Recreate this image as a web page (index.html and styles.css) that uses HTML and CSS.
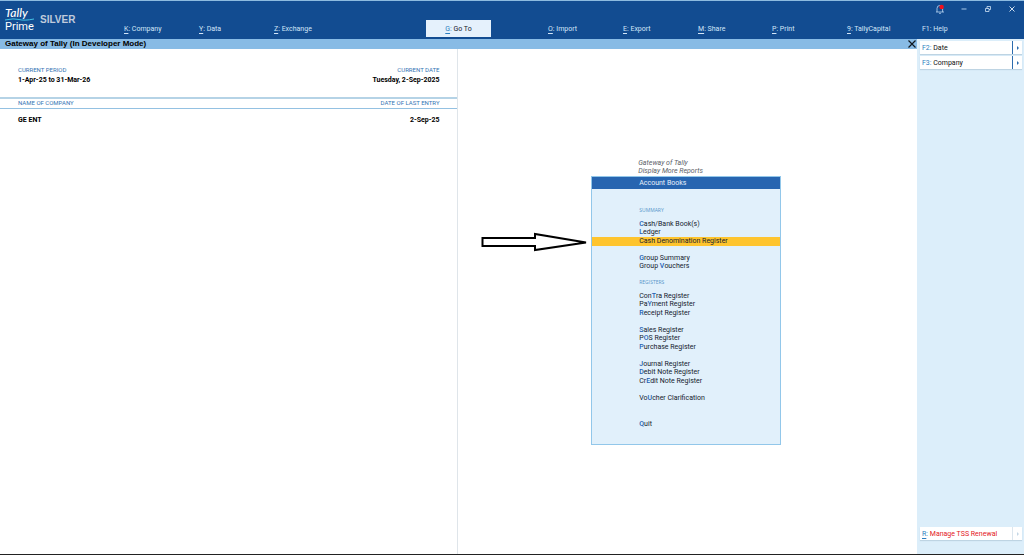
FILE: index.html
```html
<!DOCTYPE html>
<html lang="en">
<head>
<meta charset="utf-8">
<title>Gateway of Tally</title>
<link rel="stylesheet" href="styles.css">
</head>
<body>
<header class="topbar">
  <div class="brand">
    <div class="logo">
      <span class="logo-tally">Tally</span>
      <svg class="logo-swoosh" viewBox="0 0 30 3"><path d="M0 2 Q9 0 14 1.500 T29 1" fill="none" stroke="#45c3e6" stroke-width="1"/></svg>
      <span class="logo-prime">Prime</span>
    </div>
    <span class="edition">SILVER</span>
  </div>
  <div class="topbar-right">
    <div class="window-controls">
      <button class="win-btn" aria-label="Notifications"><svg viewBox="0 0 10 10"><path d="M2 8V4.5Q2 1.5 4.8 1.5Q7.6 1.5 7.6 4.5V8M1 8H9M4 9.3H6" fill="none" stroke="#bcd8f3" stroke-width=".8"/><circle cx="6.600" cy="3" r="2.300" fill="#f3101c"/></svg></button>
      <button class="win-btn" aria-label="Minimize"><svg viewBox="0 0 10 10"><path d="M2.500 5H7.500" stroke="#a8c8e8"/></svg></button>
      <button class="win-btn" aria-label="Restore"><svg viewBox="0 0 10 10"><path d="M2.500 4.500H6V7.500H2.500ZM4 4.500V2.500H7.500V5.500H6" fill="none" stroke="#d0e2f4" stroke-width=".8"/></svg></button>
      <button class="win-btn" aria-label="Close window"><svg viewBox="0 0 10 10"><path d="M2.500 2.500L7.500 7.500M7.500 2.500L2.500 7.500" stroke="#e4eef8" stroke-width=".9"/></svg></button>
    </div>
    <nav class="menu">
      <button class="menu-item"><u>K</u>: Company</button>
      <button class="menu-item"><u>Y</u>: Data</button>
      <button class="menu-item"><u>Z</u>: Exchange</button>
      <button class="menu-item goto"><span class="key"><u>G</u>:</span> Go To</button>
      <button class="menu-item"><u>O</u>: Import</button>
      <button class="menu-item"><u>E</u>: Export</button>
      <button class="menu-item"><u>M</u>: Share</button>
      <button class="menu-item"><u>P</u>: Print</button>
      <button class="menu-item"><u>9</u>: TallyCapital</button>
      <button class="menu-item">F1: Help</button>
    </nav>
  </div>
</header>
<div class="body">
  <main class="workspace">
    <div class="titlebar">
      <h1 class="title">Gateway of Tally (In Developer Mode)</h1>
      <button class="close" aria-label="Close"><svg viewBox="0 0 10 10"><path d="M1.500 1.500L8.500 8.500M8.500 1.500L1.500 8.500" stroke="#101820" stroke-width="1.200"/></svg></button>
    </div>
    <div class="panes">
      <section class="info">
        <div class="row period">
          <div><div class="label">CURRENT PERIOD</div><div class="value">1-Apr-25 to 31-Mar-26</div></div>
          <div class="end"><div class="label">CURRENT DATE</div><div class="value">Tuesday, 2-Sep-2025</div></div>
        </div>
        <div class="row heads"><span class="label">NAME OF COMPANY</span><span class="label">DATE OF LAST ENTRY</span></div>
        <div class="row company"><span class="value">GE ENT</span><span class="value">2-Sep-25</span></div>
      </section>
      <section class="stage">
        <div class="popup-wrap">
          <div class="crumbs"><div>Gateway of Tally</div><div>Display More Reports</div></div>
          <div class="popup">
            <svg class="arrow" viewBox="0 0 108 20"><path d="M1.500 6H54V2L105 10.500L54 18V14H1.500Z" fill="#fff" stroke="#000" stroke-width="2"/></svg>
            <h2 class="popup-title">Account Books</h2>
            <div class="popup-body">
              <h3 class="section">SUMMARY</h3>
              <div class="group">
                <a class="item" href="#"><b>C</b>ash/Bank Book(s)</a>
                <a class="item" href="#"><b>L</b>edger</a>
                <a class="item selected" href="#">Cash Denomination Register</a>
              </div>
              <div class="group two">
                <a class="item" href="#"><b>G</b>roup Summary</a>
                <a class="item" href="#">Group <b>V</b>ouchers</a>
              </div>
              <h3 class="section">REGISTERS</h3>
              <div class="group">
                <a class="item" href="#">Con<b>T</b>ra Register</a>
                <a class="item" href="#">Pa<b>Y</b>ment Register</a>
                <a class="item" href="#"><b>R</b>eceipt Register</a>
              </div>
              <div class="group">
                <a class="item" href="#"><b>S</b>ales Register</a>
                <a class="item" href="#">P<b>O</b>S Register</a>
                <a class="item" href="#"><b>P</b>urchase Register</a>
              </div>
              <div class="group">
                <a class="item" href="#"><b>J</b>ournal Register</a>
                <a class="item" href="#"><b>D</b>ebit Note Register</a>
                <a class="item" href="#">Cr<b>E</b>dit Note Register</a>
              </div>
              <div class="group one"><a class="item" href="#">Vo<b>U</b>cher Clarification</a></div>
              <div class="group one quit"><a class="item" href="#"><b>Q</b>uit</a></div>
            </div>
          </div>
        </div>
      </section>
    </div>
  </main>
  <aside class="sidebar">
    <div class="side-row"><button class="side-btn"><span class="key">F2:</span> Date</button><button class="side-arrow" aria-label="Expand date"></button></div>
    <div class="side-row"><button class="side-btn"><span class="key">F3:</span> Company</button><button class="side-arrow" aria-label="Expand company"></button></div>
    <div class="side-row renewal"><button class="side-btn"><span class="key"><u>R</u>:</span> Manage TSS Renewal</button><button class="side-arrow" aria-label="Expand renewal"></button></div>
  </aside>
</div>
</body>
</html>
```
FILE: styles.css
```css
* { box-sizing: border-box; }
body {
  margin: 0;
  min-height: 100vh;
  display: flex;
  flex-direction: column;
  font: 7px/8px Roboto, "Liberation Sans", sans-serif;
  color: #16222e;
  background: #fff;
  border-bottom: 1px solid #222;
}
button {
  border: 0;
  padding: 0;
  background: none;
  font: inherit;
  color: inherit;
  text-align: left;
}
svg { display: block; }
h1, h2, h3 { margin: 0; font: inherit; }
u { text-underline-offset: 2px; }

.topbar {
  display: flex;
  height: 39px;
  background: #124c91;
  border-top: 1px solid #8dbbe0;
  color: #d3e6f8;
}
.brand {
  display: flex;
  width: 124px;
  padding: 6px 0 0 5px;
  gap: 5px;
}
.logo { width: 30px; color: #fff; }
.logo-tally {
  display: block;
  font: italic 500 12px/11px Lato, sans-serif;
}
.logo-swoosh { width: 30px; height: 3px; }
.logo-prime { display: block; font-size: 11px; line-height: 12px; }
.edition {
  font: bold 10px/14px "Liberation Sans", sans-serif;
  color: #c0cbdc;
  padding-top: 6px;
}
.topbar-right {
  flex: 1;
  display: flex;
  flex-direction: column;
  justify-content: space-between;
}
.window-controls {
  display: flex;
  justify-content: flex-end;
  gap: 14px;
  padding: 3px 7px 0 0;
}
.win-btn, .win-btn svg { width: 10px; height: 10px; }
.menu {
  display: grid;
  grid-template-columns: 75fr 75fr 152fr 122fr 75fr 75fr 74fr 75fr 75fr 102fr;
  padding-bottom: 2px;
}
.menu-item { height: 17px; white-space: nowrap; }
.goto {
  width: 65px;
  background: #e5f1fc;
  color: #16222e;
  text-align: center;
}
.key { color: #2d7fc0; }

.body { flex: 1; display: flex; }
.workspace { flex: 1; display: flex; flex-direction: column; }
.titlebar {
  display: flex;
  justify-content: space-between;
  height: 10px;
  padding: 0 0 0 5px;
  background: #88bbe5;
}
.title { font: bold 8px/9px "Liberation Sans", sans-serif; color: #000; }
.close, .close svg { width: 10px; height: 10px; }
.panes { flex: 1; display: flex; }
.info { width: calc(50% - 1px); border-right: 1px solid #dfe5ea; }
.row {
  display: flex;
  justify-content: space-between;
  padding: 0 17px 0 18px;
}
.end { text-align: right; }
.label {
  font: 6px/8px Roboto, sans-serif;
  color: #3474b4;
}
.value { font-weight: bold; line-height: 10px; color: #000; }
.period { height: 48px; padding-top: 17px; }
.period .label { padding-bottom: 1px; }
.heads {
  height: 12px;
  border-top: 2px solid #b5d3e6;
  border-bottom: 1px solid #94c1e2;
}
.company { padding-top: 6px; }

.stage {
  flex: 1;
  display: flex;
  align-items: center;
  justify-content: center;
  padding-right: 2px;
}
.popup-wrap { width: 190px; }
.crumbs {
  padding-left: 47px;
  padding-bottom: 1px;
  font-style: italic;
  color: #5c6267;
}
.popup {
  position: relative;
  background: #e1f0fb;
  border: 1px solid #92c7ea;
}
.arrow {
  position: absolute;
  left: -111px;
  top: 55px;
  width: 108px;
  height: 20px;
}
.popup-title {
  padding-left: 47px;
  line-height: 12px;
  color: #e5f1fc;
  background: #2765b0;
}
.popup-body { padding: 17px 0 15px; }
.section {
  padding-left: 47px;
  margin-bottom: 6px;
  font: 5px/8px "Open Sans", sans-serif;
  color: #5796ca;
}
.group {
  display: grid;
  grid-auto-rows: 1fr;
  height: 26px;
  margin-bottom: 8px;
}
.two { height: 17px; margin-bottom: 7px; }
.one { height: 9px; }
.quit { margin: 17px 0 0; }
.item {
  display: flex;
  align-items: center;
  padding-left: 47px;
  color: #16222e;
  text-decoration: none;
  white-space: pre;
}
.item b { color: #1e62b4; font-weight: 500; }
.selected { background: #fec42e; }

.sidebar {
  width: 107px;
  display: flex;
  flex-direction: column;
  gap: 2px;
  padding: 2px 2px 14px 3px;
  background: #dceefa;
}
.side-row {
  display: flex;
  height: 13px;
  background: #fff;
  box-shadow: 0 1px 1px #bed4e3;
}
.side-btn { flex: 1; padding-left: 2px; color: #111; }
.side-arrow {
  display: grid;
  place-items: center;
  width: 10px;
  border-left: 1px solid #2c6cae;
}
.side-arrow::before {
  content: "";
  border: solid transparent;
  border-width: 2px 0 2px 2px;
  border-left-color: #2c6cae;
}
.renewal { margin-top: auto; }
.renewal .side-btn { color: #e31824; }
.renewal .side-arrow { border-left-color: #dce6ee; }
.renewal .side-arrow::before { border-left-color: #c5d7e6; }
```
